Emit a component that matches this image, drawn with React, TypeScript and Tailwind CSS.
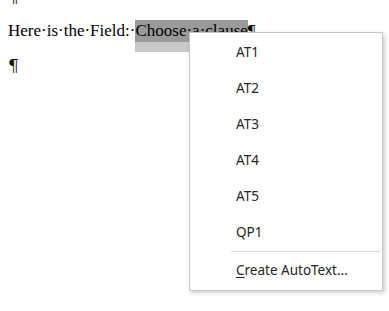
const items = ['AT1', 'AT2', 'AT3', 'AT4', 'AT5', 'QP1']

function Dotted({ text }: { text: string }) {
  // Word shows spaces as centered dots
  return <>{text.replace(/ /g, '\u00b7')}</>
}

export default function App() {
  return (
    <div className="relative w-[389px] h-[311px] overflow-hidden bg-white text-black">
      <div className="pl-[8px] font-['Liberation_Serif',serif] text-[17px] text-black">
        <div className="-mt-[15px] leading-[22px] font-['DejaVu_Serif',serif] text-[17px] text-[#111]">¶</div>
        <div className="mt-[13px] leading-[22px] whitespace-nowrap">
          <Dotted text="Here is the Field: " />
          <span className="inline-block bg-[#9a9a9a] shadow-[0_10px_0_#c8c8c8]">
            <Dotted text="Choose a clause" />
          </span>
          ¶
        </div>
        <div className="mt-[12px] leading-[22px] font-['DejaVu_Serif',serif] text-[17px] text-[#111]">¶</div>
      </div>

      <div className="absolute left-[189px] top-[32px] w-[194px] h-[259px] bg-white border border-[#c6c6c6] shadow-[2px_2px_4px_rgba(0,0,0,0.18)] font-['Noto_Sans',sans-serif] text-[13.5px] text-[#262626]">
        <div className="pt-[1px]">
          {items.map(i => (
            <div key={i} className="h-[36px] flex items-center pl-[46px]">{i}</div>
          ))}
          <div className="ml-[41px] mr-[1px] mt-[1px] h-px bg-[#dadada]" />
          <div className="h-[36px] flex items-center pl-[46px]">
            <span><span className="underline underline-offset-2">C</span>reate AutoText...</span>
          </div>
        </div>
      </div>
    </div>
  )
}
